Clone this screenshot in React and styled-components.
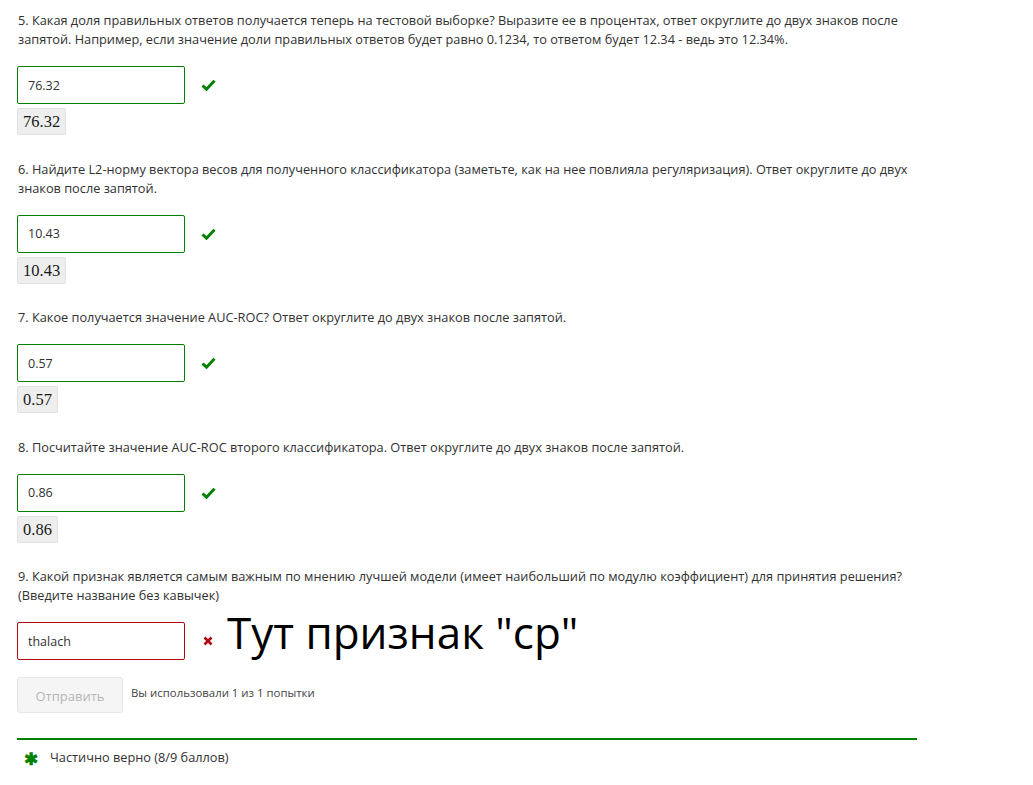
import React from "react";
import styled, { createGlobalStyle } from "styled-components";

const Global = createGlobalStyle`
  html, body { margin: 0; padding: 0; background: #fff; }
  body { font-family: "Open Sans", "Noto Sans", sans-serif; color: #313131; }
`;

const Page = styled.div`
  width: 900px;
  padding: 11px 0 0 17px;
`;

const Question = styled.div`
  display: flex;
  flex-direction: column;
  margin-bottom: 24.5px;
`;

const Prompt = styled.p`
  margin: 0 0 17px 1px;
  font-size: 12.75px;
  line-height: 19px;
  color: #313131;
`;

const Row = styled.div`
  display: flex;
  align-items: center;
  height: 38px;
`;

const Input = styled.div`
  box-sizing: border-box;
  width: 168px;
  height: 38px;
  border: 1px solid ${(p) => (p.$bad ? "#b20610" : "#008100")};
  border-radius: 2px;
  padding: 0 10px;
  display: flex;
  align-items: center;
  font-size: 12.5px;
  color: #313131;
`;

const Mark = styled.span`
  display: inline-flex;
  margin-left: 15px;
  width: 16px;
  justify-content: center;
`;

const Answer = styled.div`
  box-sizing: border-box;
  align-self: flex-start;
  margin-top: 4px;
  height: 27px;
  background: #eeeeee;
  border: 1px solid #e2e2e2;
  border-radius: 2px;
  padding: 0 5px;
  font-family: "Liberation Serif", "DejaVu Serif", serif;
  font-size: 16.5px;
  line-height: 25px;
  color: #1a1a1a;
`;

const Note = styled.span`
  margin-left: 11px;
  font-family: "Open Sans", sans-serif;
  font-size: 44px;
  color: #000;
  line-height: 1;
  position: relative;
  top: -9px;
`;

const Actions = styled.div`
  display: flex;
  align-items: flex-start;
  margin-top: 17px;
`;

const Submit = styled.button`
  box-sizing: border-box;
  width: 106px;
  height: 36px;
  background: #f5f5f5;
  border: 1px solid #e6e6e6;
  border-radius: 3px;
  color: #b5b5b5;
  font-family: "Open Sans", sans-serif;
  font-size: 13px;
  padding: 2px 0 0 0;
  display: flex;
  align-items: center;
  justify-content: center;
`;

const Attempts = styled.span`
  margin-left: 8px;
  margin-top: 8px;
  font-size: 11.4px;
  color: #444;
`;

const Status = styled.div`
  box-sizing: border-box;
  margin-top: 2px;
  border-top: 2px solid #008100;
  width: 900px;
  display: flex;
  align-items: center;
  padding: 8px 0 0 7px;
  font-size: 12.75px;
  color: #313131;
`;

const Star = styled.span`
  color: #008100;
  font-size: 17px;
  font-weight: bold;
  line-height: 1;
  margin-right: 12px;
  margin-top: 2px;
`;

const Check = () => (
  <svg width="15" height="12" viewBox="0 0 15 12">
    <path d="M1.5 6.5 L5.5 10.2 L13.5 1.8" fill="none" stroke="#008100" strokeWidth="3" />
  </svg>
);

const Cross = () => (
  <svg width="10" height="10" viewBox="0 0 10 10">
    <path d="M1.5 1.5 L8.5 8.5 M8.5 1.5 L1.5 8.5" stroke="#b20610" strokeWidth="2.6" />
  </svg>
);

const data = [
  {
    q: "5. Какая доля правильных ответов получается теперь на тестовой выборке? Выразите ее в процентах, ответ округлите до двух знаков после запятой. Например, если значение доли правильных ответов будет равно 0.1234, то ответом будет 12.34 - ведь это 12.34%.",
    a: "76.32",
  },
  {
    q: "6. Найдите L2-норму вектора весов для полученного классификатора (заметьте, как на нее повлияла регуляризация). Ответ округлите до двух знаков после запятой.",
    a: "10.43",
  },
  {
    q: "7. Какое получается значение AUC-ROC? Ответ округлите до двух знаков после запятой.",
    a: "0.57",
  },
  {
    q: "8. Посчитайте значение AUC-ROC второго классификатора. Ответ округлите до двух знаков после запятой.",
    a: "0.86",
  },
];

export default function App() {
  return (
    <Page>
      <Global />
      {data.map((d) => (
        <Question key={d.a}>
          <Prompt>{d.q}</Prompt>
          <Row>
            <Input>{d.a}</Input>
            <Mark><Check /></Mark>
          </Row>
          <Answer>{d.a}</Answer>
        </Question>
      ))}
      <Question>
        <Prompt>
          9. Какой признак является самым важным по мнению лучшей модели (имеет наибольший по модулю коэффициент) для принятия решения? (Введите название без кавычек)
        </Prompt>
        <Row>
          <Input $bad>thalach</Input>
          <Mark><Cross /></Mark>
          <Note>Тут признак "ср"</Note>
        </Row>
        <Actions>
          <Submit disabled>Отправить</Submit>
          <Attempts>Вы использовали 1 из 1 попытки</Attempts>
        </Actions>
      </Question>
      <Status>
        <Star>✱</Star>
        Частично верно (8/9 баллов)
      </Status>
    </Page>
  );
}
